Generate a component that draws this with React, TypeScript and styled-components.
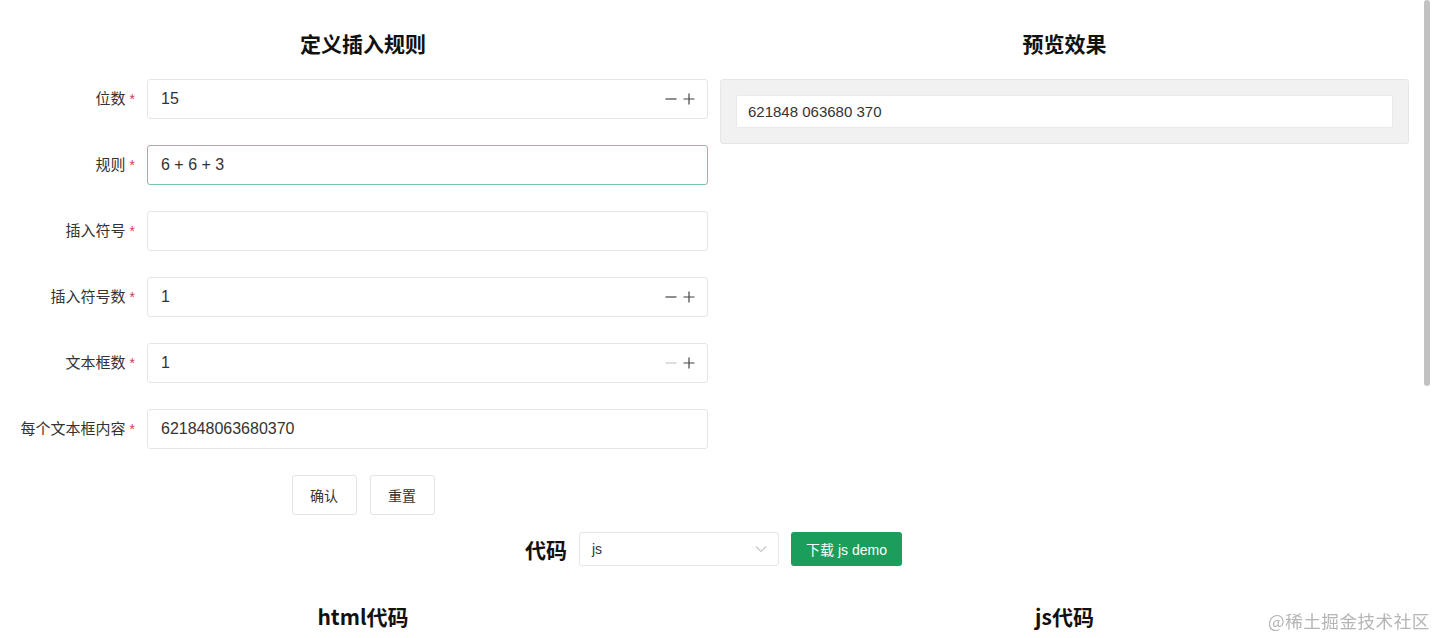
import React from 'react';
import styled, { createGlobalStyle } from 'styled-components';

const GlobalStyle = createGlobalStyle`
  html, body {
    margin: 0;
    padding: 0;
    overflow: hidden;
    background: #fff;
  }
  body {
    font-family: "Liberation Sans", "Noto Sans CJK SC", sans-serif;
    color: #333;
    font-size: 14px;
  }
`;

const Page = styled.div`
  padding: 23px 26px 0 18px;
  width: 1435px;
  box-sizing: border-box;
`;

const Columns = styled.div`
  display: grid;
  grid-template-columns: 690px 689px;
  column-gap: 12px;
`;

const Column = styled.div`
  display: flex;
  flex-direction: column;
`;

const Title = styled.div`
  height: 40px;
  line-height: 40px;
  text-align: center;
  font-size: 21px;
  font-weight: 700;
  color: #111;
  font-family: "Noto Sans CJK SC", sans-serif;
  margin-bottom: 16px;
`;

const FormRow = styled.div`
  display: flex;
  align-items: center;
  height: 40px;
  margin-bottom: 26px;
`;

const Label = styled.label`
  width: 129px;
  padding-right: 12px;
  padding-bottom: 3px;
  line-height: 1;
  box-sizing: border-box;
  text-align: right;
  font-size: 15px;
  color: #333;
  font-family: "Noto Sans CJK SC", sans-serif;
  white-space: nowrap;
`;

const Star = styled.span`
  color: #d4375a;
  margin-left: 4px;
  font-size: 14px;
  font-family: "Liberation Sans", sans-serif;
`;

const Field = styled.div<{ $focus?: boolean }>`
  flex: 1;
  height: 40px;
  box-sizing: border-box;
  border: 1px solid ${p => (p.$focus ? '#7cc4a6' : '#e6e6e6')};
  border-radius: 3px;
  display: flex;
  align-items: center;
  padding: 0 12px 0 13px;
  font-size: 16px;
  color: #333;
  background: #fff;
`;

const FieldText = styled.span`
  flex: 1;
`;

const Stepper = styled.div`
  display: flex;
  align-items: center;
  gap: 6px;
`;

const StepBtn = styled.span<{ $disabled?: boolean }>`
  display: inline-flex;
  color: ${p => (p.$disabled ? '#c8c8c8' : '#444')};
`;

const Buttons = styled.div`
  display: flex;
  justify-content: center;
  gap: 13px;
`;

const PlainButton = styled.button`
  width: 65px;
  height: 40px;
  border: 1px solid #e3e3e3;
  border-radius: 3px;
  background: #fff;
  font-size: 14px;
  color: #333;
  font-family: "Noto Sans CJK SC", sans-serif;
  padding: 0;
`;

const PreviewBox = styled.div`
  height: 65px;
  box-sizing: border-box;
  background: #f1f1f1;
  border: 1px solid #e6e6e6;
  border-radius: 3px;
  padding: 15px;
`;

const PreviewInput = styled.div`
  height: 33px;
  box-sizing: border-box;
  background: #fff;
  border: 1px solid #eaeaea;
  border-radius: 2px;
  padding: 0 11px;
  display: flex;
  align-items: center;
  font-size: 15px;
  color: #333;
`;

const CodeBar = styled.div`
  display: flex;
  justify-content: center;
  align-items: center;
  gap: 12px;
  margin-top: 17px;
  margin-bottom: 30px;
`;

const CodeLabel = styled.span`
  font-size: 21px;
  font-weight: 700;
  color: #111;
  font-family: "Noto Sans CJK SC", sans-serif;
`;

const Select = styled.div`
  width: 200px;
  height: 34px;
  box-sizing: border-box;
  border: 1px solid #e6e6e6;
  border-radius: 3px;
  display: flex;
  align-items: center;
  justify-content: space-between;
  padding: 0 11px 0 12px;
  font-size: 14px;
  color: #333;
`;

const GreenButton = styled.button`
  width: 111px;
  height: 34px;
  border: none;
  border-radius: 3px;
  background: #1b9e5b;
  color: #fff;
  font-size: 14px;
  font-family: "Liberation Sans", "Noto Sans CJK SC", sans-serif;
  padding: 0;
`;

const Scrollbar = styled.div`
  position: fixed;
  top: 0;
  left: 1424px;
  width: 6px;
  height: 386px;
  border-radius: 3px;
  background: #c2c2c2;
`;

const Watermark = styled.div`
  position: fixed;
  left: 1268px;
  top: 608px;
  font-size: 17.6px;
  color: #b5b5b5;
  font-family: "Noto Sans CJK SC", sans-serif;
  letter-spacing: 0.5px;
`;

const Minus = () => (
  <svg width="12" height="12" viewBox="0 0 12 12">
    <path d="M0.5 6h11" stroke="currentColor" strokeWidth="1.2" />
  </svg>
);

const Plus = () => (
  <svg width="12" height="12" viewBox="0 0 12 12">
    <path d="M0.5 6h11M6 0.5v11" stroke="currentColor" strokeWidth="1.2" />
  </svg>
);

const Chevron = () => (
  <svg width="12" height="8" viewBox="0 0 12 8">
    <path d="M1 1.5l5 5 5-5" stroke="#c4c4c4" strokeWidth="1.1" fill="none" />
  </svg>
);

type Row = { label: string; value: string; stepper?: boolean; minusDisabled?: boolean; focus?: boolean };

const rows: Row[] = [
  { label: '位数', value: '15', stepper: true },
  { label: '规则', value: '6 + 6 + 3', focus: true },
  { label: '插入符号', value: '' },
  { label: '插入符号数', value: '1', stepper: true },
  { label: '文本框数', value: '1', stepper: true, minusDisabled: true },
  { label: '每个文本框内容', value: '621848063680370' },
];

export default function App() {
  return (
    <>
      <GlobalStyle />
      <Page>
        <Columns>
          <Column>
            <Title>定义插入规则</Title>
            {rows.map(r => (
              <FormRow key={r.label}>
                <Label>
                  {r.label}
                  <Star>*</Star>
                </Label>
                <Field $focus={r.focus}>
                  <FieldText>{r.value}</FieldText>
                  {r.stepper && (
                    <Stepper>
                      <StepBtn $disabled={r.minusDisabled}><Minus /></StepBtn>
                      <StepBtn><Plus /></StepBtn>
                    </Stepper>
                  )}
                </Field>
              </FormRow>
            ))}
            <Buttons>
              <PlainButton>确认</PlainButton>
              <PlainButton>重置</PlainButton>
            </Buttons>
          </Column>
          <Column>
            <Title>预览效果</Title>
            <PreviewBox>
              <PreviewInput>621848 063680 370</PreviewInput>
            </PreviewBox>
          </Column>
        </Columns>
        <CodeBar>
          <CodeLabel>代码</CodeLabel>
          <Select>
            <span>js</span>
            <Chevron />
          </Select>
          <GreenButton>下载 js demo</GreenButton>
        </CodeBar>
        <Columns>
          <Column>
            <Title>html代码</Title>
          </Column>
          <Column>
            <Title>js代码</Title>
          </Column>
        </Columns>
      </Page>
      <Scrollbar />
      <Watermark>@稀土掘金技术社区</Watermark>
    </>
  );
}
